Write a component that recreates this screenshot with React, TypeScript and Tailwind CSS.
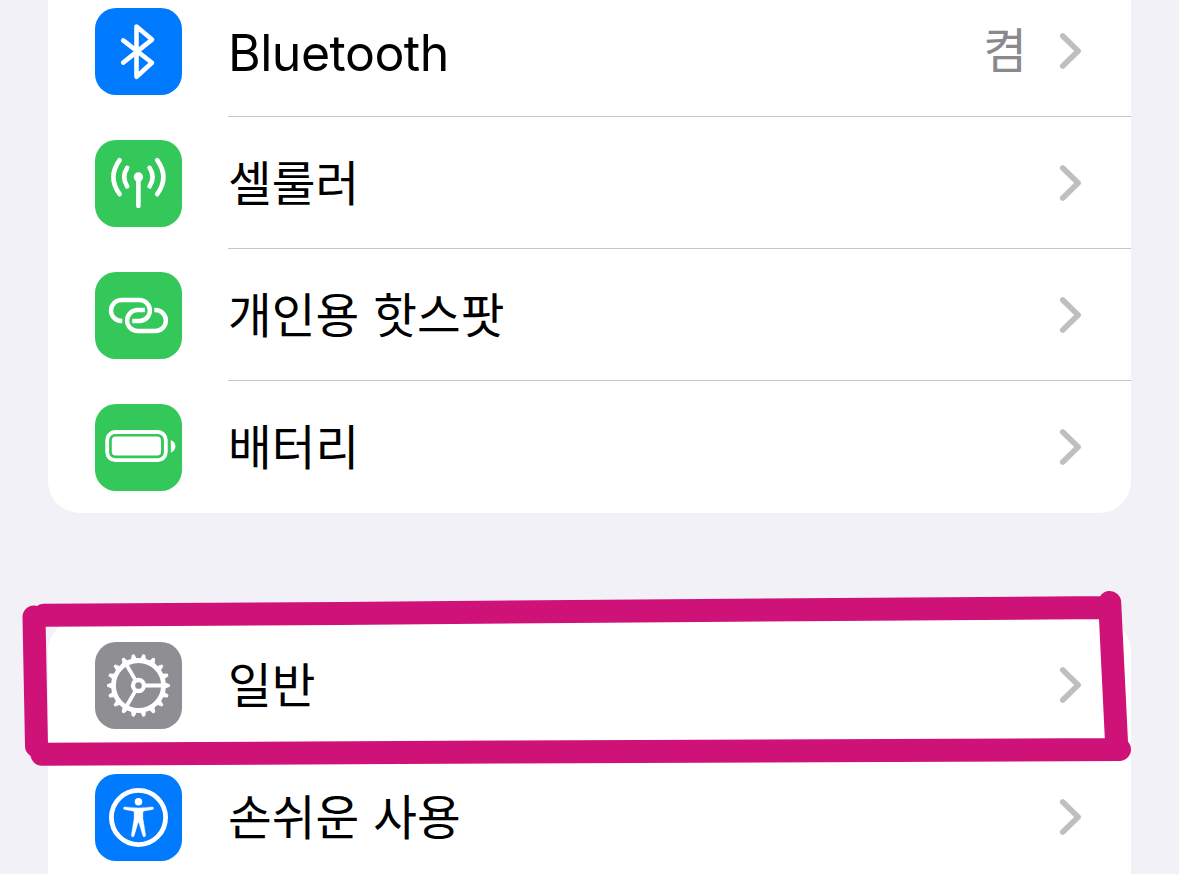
import type { ReactNode } from "react";

interface RowProps {
  icon: ReactNode;
  color: string;
  label: string;
  latin?: boolean;
  value?: string;
  last?: boolean;
}

const GEAR_TEETH = Array.from({ length: 18 }, (_, i) => i * 20);

function BluetoothIcon() {
  return (
    <path
      d="M28.2 32.4 57 54.8 41.5 68.7V18.6L57 31.6 28.2 54.6"
      stroke="white"
      strokeWidth="4.6"
      strokeLinecap="round"
      strokeLinejoin="round"
    />
  );
}

function CellularIcon() {
  return (
    <>
      <path
        d="M43.4 37v29M32.2 27.8q-6 9.3 0 18.6M54.6 27.8q6 9.3 0 18.6M24.6 20.2q-12.4 17 0 34M62.2 20.2q12.4 17 0 34"
        stroke="white"
        strokeWidth="4.6"
        strokeLinecap="round"
      />
      <circle cx="43.4" cy="37" r="4.7" fill="white" />
    </>
  );
}

function HotspotIcon() {
  return (
    <path
      d="M27.3 49H26.5A10.5 10.5 0 0 1 26.5 28H44.4A10.5 10.5 0 0 1 44.4 49H37.2M50 38H42.6A10.5 10.5 0 0 0 42.6 59H60.4A10.5 10.5 0 0 0 60.4 38H59.3"
      stroke="white"
      strokeWidth="4.4"
    />
  );
}

function BatteryIcon() {
  return (
    <>
      <rect
        x="12.2"
        y="28"
        width="58.6"
        height="28.2"
        rx="8"
        stroke="white"
        strokeWidth="3.8"
      />
      <rect x="16.8" y="32.6" width="49.2" height="19" rx="3.8" fill="white" />
      <path d="M75.8 36q4.6 2 4.6 6.3t-4.6 6.3z" fill="white" />
    </>
  );
}

function GearIcon() {
  return (
    <g transform="translate(43.5 43.5)" stroke="white">
      <circle r="25" strokeWidth="4.8" />
      {GEAR_TEETH.map((angle) => (
        <path
          key={angle}
          d="M26.5-2.4 31-0.9V0.9L26.5 2.4z"
          fill="white"
          strokeWidth="1"
          strokeLinejoin="round"
          transform={`rotate(${angle})`}
        />
      ))}
      <circle r="5.5" strokeWidth="4.3" />
      <path
        d="M6.5 0H24M-3.25 5.6-12 20.8M-3.25-5.6-12-20.8"
        strokeWidth="3.8"
      />
    </g>
  );
}

function AccessibilityIcon() {
  return (
    <>
      <circle cx="43.5" cy="43.5" r="27.1" stroke="white" strokeWidth="4.8" />
      <circle cx="43.5" cy="27.8" r="3.8" fill="white" />
      <path
        d="M30 33Q43.5 34.8 57 33A1.3 1.3 0 0 1 57.4 35.6L49.2 36.9Q47.9 37.1 47.9 38.4V44.6L50.6 60.8A1.4 1.4 0 0 1 47.9 61.9L44.2 49.5Q43.5 47.6 42.8 49.5L39.1 61.9A1.4 1.4 0 0 1 36.4 60.8L39.1 44.6V38.4Q39.1 37.1 37.8 36.9L29.6 35.6A1.3 1.3 0 0 1 30 33Z"
        fill="white"
        stroke="white"
        strokeWidth="0.4"
      />
    </>
  );
}

function Chevron() {
  return (
    <svg className="h-[38px] w-[24px]" viewBox="0 0 24 38" fill="none">
      <path
        d="M4.8 4 20.1 19 4.8 34"
        stroke="#bfbfbf"
        strokeWidth="5.7"
        strokeLinecap="round"
        strokeLinejoin="round"
      />
    </svg>
  );
}

function SettingsRow({ icon, color, label, latin, value, last }: RowProps) {
  return (
    <div className="flex h-[132px] pl-[47px]">
      <div className={`mt-[23px] size-[87px] shrink-0 rounded-[21px] ${color}`}>
        <svg className="size-full" viewBox="0 0 87 87" fill="none">
          {icon}
        </svg>
      </div>
      <div
        className={`ml-[46px] flex flex-1 items-center border-b pr-[49px] ${
          last ? "border-transparent" : "border-[#c6c6c8]"
        }`}
      >
        <span
          className={
            latin
              ? "pt-1 font-['Inter','Noto_Sans_CJK_KR',sans-serif] text-[50px] leading-none tracking-[-0.5px]"
              : "pb-[3px] font-['Noto_Sans_CJK_KR',sans-serif] text-[47.5px] leading-none [word-spacing:3.5px]"
          }
        >
          {label}
        </span>
        <div className="ml-auto flex items-center gap-[31px]">
          {value && (
            <span className="pb-[5px] font-['Noto_Sans_CJK_KR',sans-serif] text-[47.5px] leading-none text-[#8a8a8e]">
              {value}
            </span>
          )}
          <Chevron />
        </div>
      </div>
    </div>
  );
}

// Hand-drawn marker frame around the General row
function MarkerFrame() {
  return (
    <svg
      className="pointer-events-none absolute inset-0"
      width="1179"
      height="874"
      viewBox="0 0 1179 874"
      fill="none"
    >
      <path
        d="M44 615.3 340 613.5 700 610.5 1109.5 607.5M34 617 36.5 746M42 754.3 500 752 1119.5 749.5M1109.7 602.5 1116.8 748"
        stroke="#cf1278"
        strokeWidth="23"
        strokeLinecap="round"
      />
    </svg>
  );
}

export default function App() {
  return (
    <div className="relative h-[874px] w-[1179px] overflow-hidden bg-[#f2f1f7] px-12 text-black">
      <div className="-mt-[15px] rounded-b-[32px] bg-white">
        <SettingsRow icon={<BluetoothIcon />} color="bg-[#007aff]" label="Bluetooth" latin value="켬" />
        <SettingsRow icon={<CellularIcon />} color="bg-[#34c759]" label="셀룰러" />
        <SettingsRow icon={<HotspotIcon />} color="bg-[#34c759]" label="개인용 핫스팟" />
        <SettingsRow icon={<BatteryIcon />} color="bg-[#34c759]" label="배터리" last />
      </div>
      <div className="mt-[106px] rounded-t-[32px] bg-white">
        <SettingsRow icon={<GearIcon />} color="bg-[#8e8e93]" label="일반" />
        <SettingsRow icon={<AccessibilityIcon />} color="bg-[#007aff]" label="손쉬운 사용" />
      </div>
      <MarkerFrame />
    </div>
  );
}
